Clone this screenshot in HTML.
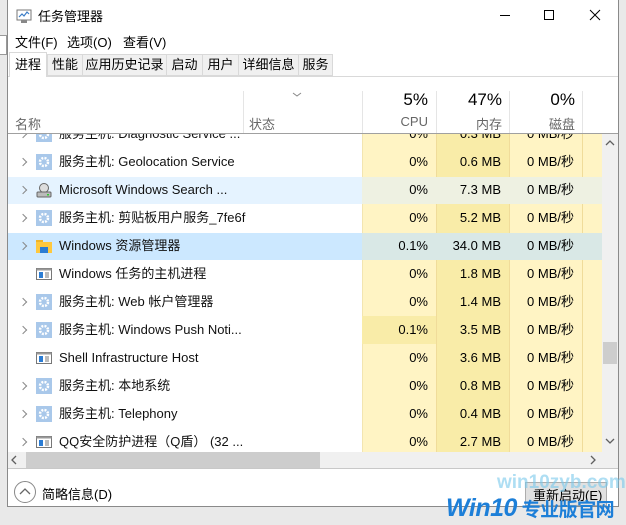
<!DOCTYPE html>
<html><head><meta charset="utf-8"><style>
*{margin:0;padding:0;box-sizing:border-box}
html{overflow:hidden}
body{width:626px;height:525px;background:#e9e9e9;position:relative;overflow:hidden;font-family:"Liberation Sans","Noto Sans CJK SC",sans-serif;font-size:13px;color:#000}
.a{position:absolute}
#win{left:7px;top:0;width:612px;height:507px;background:#fff;border:1px solid #8a8a8a;border-top:none}
.t{white-space:nowrap}
.row{position:absolute;left:8px;width:594px;height:28px}
.c{position:absolute;top:0;height:28px;line-height:28px;text-align:right;padding-right:8px;white-space:nowrap}
.nm{position:absolute;left:51px;top:0;line-height:28px;white-space:nowrap;color:#111}
.ar{position:absolute;left:12px;top:11px;width:6px;height:6px;border-right:1.3px solid #888;border-bottom:1.3px solid #888;transform:rotate(-45deg)}
.ic{position:absolute;left:28px;top:6px;width:16px;height:16px}
.tab{position:absolute;top:54px;height:22px;line-height:20px;background:#f0f0f0;border:1px solid #d9d9d9;text-align:center;white-space:nowrap;font-size:13px;overflow:hidden}
</style></head><body>
<div class="a" style="left:0;top:35px;width:7px;height:20px;border:1px solid #999;border-left:none;background:#fff"></div>
<div id="win" class="a"></div>
<svg class="a" style="left:16px;top:8px" width="17" height="16"><rect x="1" y="2" width="14" height="10" fill="#fff" stroke="#777"/><polyline points="3,9 6,6 8,8 11,4 13,6" fill="none" stroke="#3a7cc6" stroke-width="1.2"/><rect x="5" y="12" width="6" height="3" fill="#888"/></svg>
<div class="a t" style="left:38px;top:6px;font-size:13px">任务管理器</div>
<div class="a" style="left:500px;top:15px;width:10px;height:1px;background:#000"></div>
<div class="a" style="left:544px;top:10px;width:10px;height:10px;border:1px solid #000"></div>
<svg class="a" style="left:589px;top:9px" width="12" height="12"><path d="M1 1L11 11M11 1L1 11" stroke="#000" stroke-width="1"/></svg>
<div class="a t" style="left:15px;top:32px">文件(F)</div>
<div class="a t" style="left:67px;top:32px">选项(O)</div>
<div class="a t" style="left:123px;top:32px">查看(V)</div>
<div class="a" style="left:8px;top:76px;width:610px;height:1px;background:#d9d9d9"></div>
<div class="tab" style="left:47px;width:36px">性能</div>
<div class="tab" style="left:82px;width:85px">应用历史记录</div>
<div class="tab" style="left:166px;width:37px">启动</div>
<div class="tab" style="left:202px;width:37px">用户</div>
<div class="tab" style="left:238px;width:61px">详细信息</div>
<div class="tab" style="left:298px;width:35px">服务</div>
<div class="tab" style="left:9px;top:52px;width:38px;height:25px;background:#fff;border-bottom:none;line-height:23px">进程</div>
<div class="a" style="left:243px;top:91px;width:1px;height:42px;background:#e5e5e5"></div>
<div class="a" style="left:362px;top:91px;width:1px;height:42px;background:#e5e5e5"></div>
<div class="a" style="left:436px;top:91px;width:1px;height:42px;background:#e5e5e5"></div>
<div class="a" style="left:509px;top:91px;width:1px;height:42px;background:#e5e5e5"></div>
<div class="a" style="left:582px;top:91px;width:1px;height:42px;background:#e5e5e5"></div>
<svg class="a" style="left:292px;top:92px" width="10" height="6"><path d="M1 1L5 4L9 1" fill="none" stroke="#888"/></svg>
<div class="a t" style="left:15px;top:114px;color:#666">名称</div>
<div class="a t" style="left:249px;top:114px;color:#666">状态</div>
<div class="a t" style="left:362px;top:90px;width:66px;text-align:right;font-size:17px">5%</div>
<div class="a t" style="left:436px;top:90px;width:66px;text-align:right;font-size:17px">47%</div>
<div class="a t" style="left:509px;top:90px;width:66px;text-align:right;font-size:17px">0%</div>
<div class="a t" style="left:362px;top:114px;width:66px;text-align:right;color:#666">CPU</div>
<div class="a t" style="left:436px;top:114px;width:66px;text-align:right;color:#666">内存</div>
<div class="a t" style="left:509px;top:114px;width:66px;text-align:right;color:#666">磁盘</div>
<div class="a" style="left:8px;top:133px;width:610px;height:1px;background:#a0a0a0"></div>
<div class="a" style="left:0;top:0;width:626px;height:452px;overflow:hidden">
<div class="a" style="left:362px;top:134px;width:74px;height:318px;background:#fff4c4"></div>
<div class="a" style="left:436px;top:134px;width:73px;height:318px;background:#f9eca8"></div>
<div class="a" style="left:509px;top:134px;width:73px;height:318px;background:#fff4c4"></div>
<div class="a" style="left:582px;top:134px;width:20px;height:318px;background:#fff4c4"></div>
<div class="a" style="left:436px;top:134px;width:1px;height:318px;background:#f0dc9a"></div>
<div class="a" style="left:509px;top:134px;width:1px;height:318px;background:#f0dc9a"></div>
<div class="a" style="left:582px;top:134px;width:1px;height:318px;background:#f0dc9a"></div>
<div class="a" style="left:362px;top:134px;width:1px;height:318px;background:#f3e5b0"></div>
<div class="a" style="left:8px;top:177px;width:354px;height:27px;background:#e5f3ff"></div>
<div class="a" style="left:362px;top:177px;width:240px;height:27px;background:#eef1e2"></div>
<div class="a" style="left:8px;top:233px;width:354px;height:27px;background:#cce8ff"></div>
<div class="a" style="left:362px;top:233px;width:240px;height:27px;background:#d9e8e6"></div>
<div class="a" style="left:362px;top:316px;width:74px;height:28px;background:#f9eca8"></div>
<div class="a" style="left:0;top:134px;width:626px;height:318px;overflow:hidden">
<div class="row" style="top:-14px"><div class="ar"></div><svg class="ic" viewBox="0 0 16 16"><rect width="16" height="16" fill="#a9c8ea"/><circle cx="8" cy="8" r="4" fill="none" stroke="#fff" stroke-width="2.5" stroke-dasharray="2 1.2"/></svg><div class="nm">服务主机: Diagnostic Service ...</div><div class="c" style="left:354px;width:74px">0%</div><div class="c" style="left:428px;width:73px">0.3 MB</div><div class="c" style="left:501px;width:73px">0 MB/秒</div></div>
</div>
<div class="row" style="top:148px"><div class="ar"></div><svg class="ic" viewBox="0 0 16 16"><rect width="16" height="16" fill="#a9c8ea"/><circle cx="8" cy="8" r="4" fill="none" stroke="#fff" stroke-width="2.5" stroke-dasharray="2 1.2"/></svg><div class="nm">服务主机: Geolocation Service</div><div class="c" style="left:354px;width:74px">0%</div><div class="c" style="left:428px;width:73px">0.6 MB</div><div class="c" style="left:501px;width:73px">0 MB/秒</div></div>
<div class="row" style="top:176px"><div class="ar"></div><svg class="ic" viewBox="0 0 16 16"><circle cx="8" cy="6" r="4.5" fill="#ddd" stroke="#666"/><rect x="1" y="10" width="14" height="5" rx="1" fill="#bbb" stroke="#666"/><rect x="11" y="12" width="2" height="1.5" fill="#3c3"/></svg><div class="nm">Microsoft Windows Search ...</div><div class="c" style="left:354px;width:74px">0%</div><div class="c" style="left:428px;width:73px">7.3 MB</div><div class="c" style="left:501px;width:73px">0 MB/秒</div></div>
<div class="row" style="top:204px"><div class="ar"></div><svg class="ic" viewBox="0 0 16 16"><rect width="16" height="16" fill="#a9c8ea"/><circle cx="8" cy="8" r="4" fill="none" stroke="#fff" stroke-width="2.5" stroke-dasharray="2 1.2"/></svg><div class="nm">服务主机: 剪贴板用户服务_7fe6f</div><div class="c" style="left:354px;width:74px">0%</div><div class="c" style="left:428px;width:73px">5.2 MB</div><div class="c" style="left:501px;width:73px">0 MB/秒</div></div>
<div class="row" style="top:232px"><div class="ar"></div><svg class="ic" viewBox="0 0 16 16"><rect x="0" y="2" width="7" height="3" fill="#f0b429"/><rect x="0" y="4" width="16" height="11" fill="#ffc83d"/><rect x="4" y="9" width="8" height="6" fill="#2b7cd3"/></svg><div class="nm">Windows 资源管理器</div><div class="c" style="left:354px;width:74px">0.1%</div><div class="c" style="left:428px;width:73px">34.0 MB</div><div class="c" style="left:501px;width:73px">0 MB/秒</div></div>
<div class="row" style="top:260px"><svg class="ic" viewBox="0 0 16 16"><rect x="0.5" y="2.5" width="15" height="11" fill="#fff" stroke="#777"/><rect x="0.5" y="2.5" width="15" height="2" fill="#999"/><rect x="3" y="6" width="4" height="6" fill="#2b7cd3"/><path d="M9 7h4M9 9h4M9 11h4" stroke="#777"/></svg><div class="nm">Windows 任务的主机进程</div><div class="c" style="left:354px;width:74px">0%</div><div class="c" style="left:428px;width:73px">1.8 MB</div><div class="c" style="left:501px;width:73px">0 MB/秒</div></div>
<div class="row" style="top:288px"><div class="ar"></div><svg class="ic" viewBox="0 0 16 16"><rect width="16" height="16" fill="#a9c8ea"/><circle cx="8" cy="8" r="4" fill="none" stroke="#fff" stroke-width="2.5" stroke-dasharray="2 1.2"/></svg><div class="nm">服务主机: Web 帐户管理器</div><div class="c" style="left:354px;width:74px">0%</div><div class="c" style="left:428px;width:73px">1.4 MB</div><div class="c" style="left:501px;width:73px">0 MB/秒</div></div>
<div class="row" style="top:316px"><div class="ar"></div><svg class="ic" viewBox="0 0 16 16"><rect width="16" height="16" fill="#a9c8ea"/><circle cx="8" cy="8" r="4" fill="none" stroke="#fff" stroke-width="2.5" stroke-dasharray="2 1.2"/></svg><div class="nm">服务主机: Windows Push Noti...</div><div class="c" style="left:354px;width:74px">0.1%</div><div class="c" style="left:428px;width:73px">3.5 MB</div><div class="c" style="left:501px;width:73px">0 MB/秒</div></div>
<div class="row" style="top:344px"><svg class="ic" viewBox="0 0 16 16"><rect x="0.5" y="2.5" width="15" height="11" fill="#fff" stroke="#777"/><rect x="0.5" y="2.5" width="15" height="2" fill="#999"/><rect x="3" y="6" width="4" height="6" fill="#2b7cd3"/><path d="M9 7h4M9 9h4M9 11h4" stroke="#777"/></svg><div class="nm">Shell Infrastructure Host</div><div class="c" style="left:354px;width:74px">0%</div><div class="c" style="left:428px;width:73px">3.6 MB</div><div class="c" style="left:501px;width:73px">0 MB/秒</div></div>
<div class="row" style="top:372px"><div class="ar"></div><svg class="ic" viewBox="0 0 16 16"><rect width="16" height="16" fill="#a9c8ea"/><circle cx="8" cy="8" r="4" fill="none" stroke="#fff" stroke-width="2.5" stroke-dasharray="2 1.2"/></svg><div class="nm">服务主机: 本地系统</div><div class="c" style="left:354px;width:74px">0%</div><div class="c" style="left:428px;width:73px">0.8 MB</div><div class="c" style="left:501px;width:73px">0 MB/秒</div></div>
<div class="row" style="top:400px"><div class="ar"></div><svg class="ic" viewBox="0 0 16 16"><rect width="16" height="16" fill="#a9c8ea"/><circle cx="8" cy="8" r="4" fill="none" stroke="#fff" stroke-width="2.5" stroke-dasharray="2 1.2"/></svg><div class="nm">服务主机: Telephony</div><div class="c" style="left:354px;width:74px">0%</div><div class="c" style="left:428px;width:73px">0.4 MB</div><div class="c" style="left:501px;width:73px">0 MB/秒</div></div>
<div class="row" style="top:428px"><div class="ar"></div><svg class="ic" viewBox="0 0 16 16"><rect x="0.5" y="2.5" width="15" height="11" fill="#fff" stroke="#777"/><rect x="0.5" y="2.5" width="15" height="2" fill="#999"/><rect x="3" y="6" width="4" height="6" fill="#2b7cd3"/><path d="M9 7h4M9 9h4M9 11h4" stroke="#777"/></svg><div class="nm">QQ安全防护进程（Q盾） (32 ...</div><div class="c" style="left:354px;width:74px">0%</div><div class="c" style="left:428px;width:73px">2.7 MB</div><div class="c" style="left:501px;width:73px">0 MB/秒</div></div>
</div>
<div class="a" style="left:602px;top:134px;width:16px;height:318px;background:#f0f0f0"></div>
<svg class="a" style="left:605px;top:140px" width="10" height="7"><path d="M1 5L5 1L9 5" fill="none" stroke="#606060" stroke-width="1.3"/></svg>
<div class="a" style="left:603px;top:342px;width:14px;height:22px;background:#cdcdcd"></div>
<svg class="a" style="left:605px;top:438px" width="10" height="7"><path d="M1 1L5 5L9 1" fill="none" stroke="#606060" stroke-width="1.3"/></svg>
<div class="a" style="left:8px;top:452px;width:610px;height:16px;background:#f0f0f0"></div>
<div class="a" style="left:26px;top:452px;width:294px;height:16px;background:#cdcdcd"></div>
<svg class="a" style="left:11px;top:455px" width="8" height="10"><path d="M5 1L1 5L5 9" fill="none" stroke="#606060" stroke-width="1.3"/></svg>
<svg class="a" style="left:589px;top:455px" width="8" height="10"><path d="M2 1L6 5L2 9" fill="none" stroke="#606060" stroke-width="1.3"/></svg>
<div class="a" style="left:8px;top:468px;width:610px;height:1px;background:#c8c8c8"></div>
<svg class="a" style="left:13px;top:480px" width="24" height="24"><circle cx="12" cy="12" r="10.5" fill="none" stroke="#888"/><path d="M7 14L12 9L17 14" fill="none" stroke="#666" stroke-width="1.3"/></svg>
<div class="a t" style="left:42px;top:484px">简略信息(D)</div>
<div class="a" style="left:525px;top:482px;width:82px;height:24px;background:#e1e1e1;border:1px solid #adadad"></div>
<div class="a t" style="left:533px;top:485px">重新启动(E)</div>
<div class="a t" style="left:497px;top:472px;font-size:19px;font-weight:bold;color:rgba(120,200,235,0.6)">win10zyb.com</div>
<div class="a t" style="left:446px;top:493px;height:30px;font-size:25px;line-height:30px;font-weight:bold;font-style:italic;color:#1d7fd8;letter-spacing:-0.5px">Win10<span style="font-size:19px;font-style:normal"> 专业版官网</span></div>
</body></html>
